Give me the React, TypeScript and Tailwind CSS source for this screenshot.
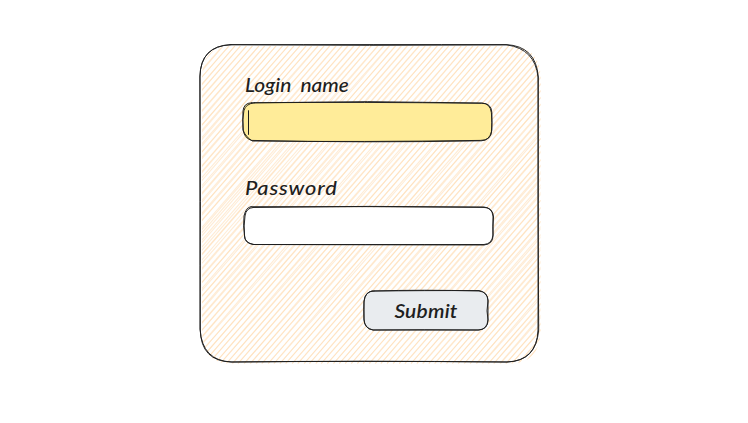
import React from "react";

const hatch: string[] = [];
const slope = 1.15;
const top = 46;
const bottom = 363.5;
const left = 202;

function wobble(n: number) {
  const v = Math.sin(n * 12.9898) * 43758.5453;
  return v - Math.floor(v) - 0.5;
}

// Two pencil passes for each hatch line; they meet near the edges and part in the middle.
for (let i = 0; i < 104; i++) {
  const x = left + 3 + i * 5.95;
  for (let pass = 0; pass < 2; pass++) {
    const a = x + wobble(i * 4 + pass) * 0.9;
    const b = x - (bottom - top) / slope + wobble(i * 4 + pass + 2) * 0.9;
    const m = (a + b) / 2 + wobble(i * 7 + pass) * 4.5 + (pass ? 1.6 : -1);
    hatch.push(`M${a} ${top}Q${m} ${(top + bottom) / 2} ${b} ${bottom}`);
  }
}

function Sketch({ paths }: { paths: string[] }) {
  return (
    <>
      {paths.map((d) => (
        <path key={d} d={d} fill="none" stroke="#1e1e1e" strokeWidth={0.95} strokeLinecap="round" />
      ))}
    </>
  );
}

function Field({ id, label, active }: { id: string; label: string; active?: boolean }) {
  return (
    <div className="flex flex-col">
      <label
        htmlFor={id}
        className={
          active
            ? "ml-[2px] h-[28px] origin-left scale-x-[1.1] whitespace-nowrap text-[19px] leading-[27px] [word-spacing:4px]"
            : "ml-[2px] h-[28px] origin-left scale-x-[1.15] whitespace-nowrap text-[19px] leading-[25px] tracking-[0.7px]"
        }
      >
        {label}
      </label>
      <div id={id} className="relative mt-[3px] h-[40px] w-[251px]">
        <svg className="absolute inset-0 overflow-visible" width="251" height="40" viewBox="0 0 251 40">
          {active ? (
            <g transform="translate(-.6 -.2)">
              <path d="M9 1Q130 .5 240 1.5Q249 2 249 11V30Q249 38.5 239 39Q120 40.5 10 38.8Q1 38 1 29V11Q1 1 9 1Z" fill="#ffec99" />
              <Sketch
                paths={[
                  "M12 1Q125 -1.4 240 1.2Q248 2 249 11Q250 21 249 30Q247 38.5 239 39Q120 41.2 9 38.6Q2 36 1 29Q-.5 17 1.5 9Q3 2 12 1",
                  "M9 1Q120 0 239 1.5Q249 1 249.5 11V28Q249 39 238 38.6Q120 40.4 10 39.2Q3 35 .5 28V10Q1 1 9 1",
                ]}
              />
              <path d="M6.1 8.5V33" stroke="#1e1e1e" strokeWidth="1" />
            </g>
          ) : (
            <>
              <path d="M10 1.5L241 1.5Q250 2 250 11V30Q250 39 241 39H10Q1 38 1 30V11Q1 2 10 1.5Z" fill="#fff" />
              <Sketch
                paths={[
                  "M10 1.5Q125 -.5 241 1Q250 2 250.5 11Q249.5 20 250 30Q250 38 241 39Q120 38.8 11 38.5Q2 37 1.5 30Q.5 20 2 10Q3 2 10 1.5",
                  "M8 .7Q125 .2 240 1.4Q249 1 250 10V29Q249 38 241 38.5Q120 38.5 10 38.5Q1 37 1.5 29Q0 20 1 10Q3 1 8 .7",
                ]}
              />
            </>
          )}
        </svg>
      </div>
    </div>
  );
}

export default function App() {
  return (
    <main className="h-[423px] w-[748px] overflow-hidden bg-white pl-[199px] pt-[43px] font-['Lato','Open_Sans',sans-serif] font-medium italic text-[#1e1e1e]">
      <section className="relative h-[320px] w-[341px]">
        <svg className="absolute inset-0 overflow-visible" width="341" height="320" viewBox="199 43 341 320">
          <defs>
            <clipPath id="card">
              <path d="M232 46H508Q540.5 46 540.5 78V331Q540 364 508 364H232Q202 364 202 331V78Q202 46 232 46Z" />
            </clipPath>
          </defs>
          <g clipPath="url(#card)">
            {hatch.map((d) => (
              <path key={d} d={d} stroke="#ffd8a8" strokeWidth="1.1" strokeOpacity=".48" fill="none" />
            ))}
          </g>
          <Sketch
            paths={[
              "M231 44.7Q370 45.8 507 44.9Q535 49 538 77Q538.5 204 538 330Q537 361 507 362Q360 360.8 231 362Q201 361 200.3 330Q199.7 200 200 77Q200 46 231 44.7",
              "M230 44.7Q380 44.5 506 44.6Q536 46 538.3 77Q537.5 205 538.7 330Q536 361 507 362Q360 360.5 232 362Q202 361 200 329Q200.8 200 199.9 76Q201 46 230 44.7",
            ]}
          />
        </svg>
        <form className="relative flex flex-col pl-[44px] pt-[28px]">
          <Field id="login" label="Login name" active />
          <div className="mt-[33px]">
            <Field id="password" label="Password" />
          </div>
          <button type="button" className="relative ml-[120px] mt-[43px] h-[42px] w-[126px]">
            <svg className="absolute inset-0 overflow-visible" width="126" height="42" viewBox="0 0 126 42">
              <path d="M10 2H116Q125 2 125 12V31Q125 41 115 41H10Q1 40 1 31V12Q1 2 10 2Z" fill="#e9ecef" />
              <Sketch
                paths={[
                  "M11 2Q60 .5 116 2Q125 3 125 12Q123 22 125 31Q125 40 116 41H10Q2 40 1 31Q.5 20 1 12Q2 2 11 2",
                  "M9 2Q60 1.5 116 1.5Q124 3 125 11V31Q124 41 115 41Q60 40.5 10 41Q1 39 1 30V13Q2 3 9 2",
                ]}
              />
            </svg>
            <span className="relative block scale-x-[1.1] text-[19px] font-semibold leading-[41px] tracking-[0.2px]">
              Submit
            </span>
          </button>
        </form>
      </section>
    </main>
  );
}
